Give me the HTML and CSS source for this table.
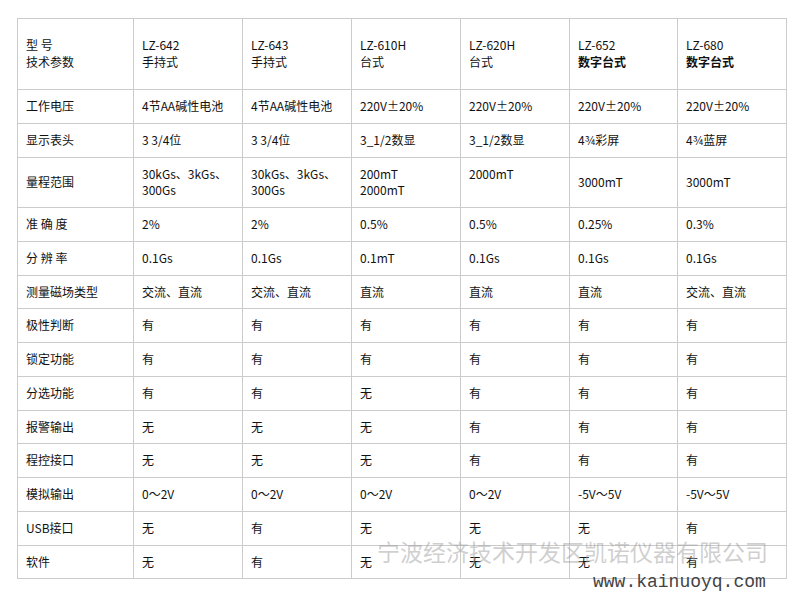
FILE: index.html
```html
<!DOCTYPE html>
<html lang="zh-CN">
<head>
<meta charset="utf-8">
<title>高斯计技术参数</title>
<link rel="stylesheet" href="styles.css">
</head>
<body>
<div class="page">
  <table class="spec">
    <colgroup>
      <col class="c-first"><col class="c"><col class="c"><col class="c"><col class="c"><col class="c-narrow"><col class="c">
    </colgroup>
    <tr class="head">
      <td>型 号<br>技术参数</td>
      <td>LZ-642<br>手持式</td>
      <td>LZ-643<br>手持式</td>
      <td>LZ-610H<br>台式</td>
      <td>LZ-620H<br>台式</td>
      <td>LZ-652<br><b>数字台式</b></td>
      <td>LZ-680<br><b>数字台式</b></td>
    </tr>
    <tr><td>工作电压</td><td>4节AA碱性电池</td><td>4节AA碱性电池</td><td>220V±20%</td><td>220V±20%</td><td>220V±20%</td><td>220V±20%</td></tr>
    <tr><td>显示表头</td><td>3 3/4位</td><td>3 3/4位</td><td>3_1/2数显</td><td>3_1/2数显</td><td>4¾彩屏</td><td>4¾蓝屏</td></tr>
    <tr><td>量程范围</td><td>30kGs、3kGs、<br>300Gs</td><td>30kGs、3kGs、<br>300Gs</td><td>200mT<br>2000mT</td><td>2000mT<br>&nbsp;</td><td>3000mT</td><td>3000mT</td></tr>
    <tr><td>准 确 度</td><td>2%</td><td>2%</td><td>0.5%</td><td>0.5%</td><td>0.25%</td><td>0.3%</td></tr>
    <tr><td>分 辨 率</td><td>0.1Gs</td><td>0.1Gs</td><td>0.1mT</td><td>0.1Gs</td><td>0.1Gs</td><td>0.1Gs</td></tr>
    <tr><td>测量磁场类型</td><td>交流、直流</td><td>交流、直流</td><td>直流</td><td>直流</td><td>直流</td><td>交流、直流</td></tr>
    <tr><td>极性判断</td><td>有</td><td>有</td><td>有</td><td>有</td><td>有</td><td>有</td></tr>
    <tr><td>锁定功能</td><td>有</td><td>有</td><td>有</td><td>有</td><td>有</td><td>有</td></tr>
    <tr><td>分选功能</td><td>有</td><td>有</td><td>无</td><td>有</td><td>有</td><td>有</td></tr>
    <tr><td>报警输出</td><td>无</td><td>无</td><td>无</td><td>有</td><td>有</td><td>有</td></tr>
    <tr><td>程控接口</td><td>无</td><td>无</td><td>无</td><td>有</td><td>有</td><td>有</td></tr>
    <tr><td>模拟输出</td><td>0～2V</td><td>0～2V</td><td>0～2V</td><td>0～2V</td><td>-5V～5V</td><td>-5V～5V</td></tr>
    <tr><td>USB接口</td><td>无</td><td>有</td><td>无</td><td>无</td><td>无</td><td>有</td></tr>
    <tr><td>软件</td><td>无</td><td>有</td><td>无</td><td>无</td><td>无</td><td>有</td></tr>
  </table>
  <div class="wm-name">宁波经济技术开发区凯诺仪器有限公司</div>
  <div class="wm-url">www.kainuoyq.com</div>
</div>
</body>
</html>
```
FILE: styles.css
```css
html, body {
  margin: 0;
  padding: 0;
  background: #fff;
}
.page {
  position: relative;
  width: 800px;
  height: 600px;
  padding: 18px 0 0 17px;
  box-sizing: border-box;
}
.spec {
  border-collapse: collapse;
  table-layout: fixed;
  width: 770px;
  font-family: "Noto Sans CJK SC", "Microsoft YaHei", sans-serif;
  font-size: 12px;
  line-height: 16.75px;
  color: #111;
}
.c-first { width: 116px; }
.c { width: 109px; }
.c-narrow { width: 108px; }
.spec td {
  border: 1px solid #cbcbcb;
  padding: 8px 8px 8px 8px;
  vertical-align: middle;
  text-align: left;
  white-space: nowrap;
}
.spec .head td {
  height: 38px;
  padding-top: 16px;
  padding-bottom: 16px;
}
.spec b {
  font-weight: 700;
}
.wm-name {
  position: absolute;
  left: 377px;
  top: 535px;
  font-family: "Noto Sans CJK SC", sans-serif;
  font-size: 23px;
  line-height: 32px;
  color: rgba(160, 160, 160, 0.5);
  white-space: nowrap;
}
.wm-url {
  position: absolute;
  left: 593px;
  top: 571px;
  font-family: "Liberation Mono", "Courier New", monospace;
  font-size: 18px;
  line-height: 22px;
  color: #444;
  white-space: nowrap;
}
```
